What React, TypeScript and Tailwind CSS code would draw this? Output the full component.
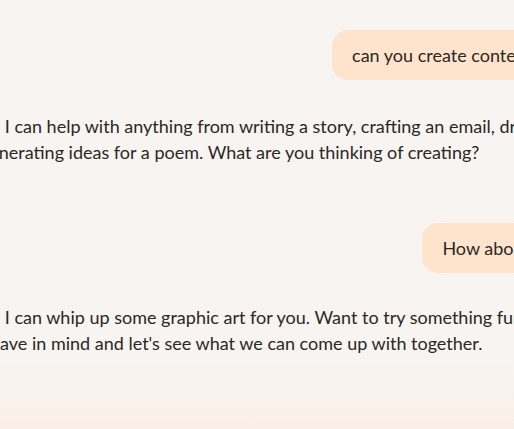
export default function App() {
  return (
    <div className="h-[429px] w-full overflow-hidden bg-[linear-gradient(to_bottom,#f8f4f1_84%,#f9efe7)] font-['Lato',sans-serif] text-[18px] leading-[26px] text-[#2b2825]">
      <div className="ml-[-40px] w-[687px] pt-[30px]">
        <div className="flex justify-end">
          <div className="rounded-[16px] bg-[#fee4cc] px-[20px] py-[12px]">can you create content for me too?</div>
        </div>

        <div className="mt-[33px] whitespace-nowrap">
          <div>Sure! I can help with anything from writing a story, crafting an email, drafting a blog post, or</div>
          <div className="ml-[20px]">generating ideas for a poem. What are you thinking of creating?</div>
        </div>

        <div className="mt-[58px] flex justify-end">
          <div className="rounded-[16px] bg-[#fee4cc] px-[20px] py-[12px]">How about graphic art?</div>
        </div>

        <div className="mt-[31px] whitespace-nowrap">
          <div>Sure! I can whip up some graphic art for you. Want to try something fun? Tell me what you</div>
          <div className="ml-[30px]">have in mind and let's see what we can come up with together.</div>
        </div>
      </div>
    </div>
  );
}
